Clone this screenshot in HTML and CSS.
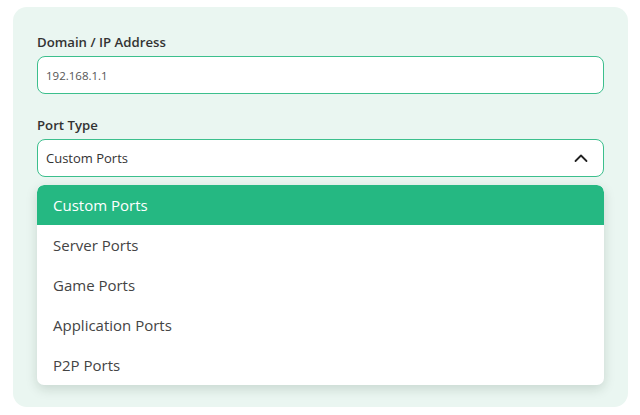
FILE: index.html
```html
<!DOCTYPE html>
<html lang="en">

<head>
    <meta charset="UTF-8">
    <meta name="viewport" content="width=device-width, initial-scale=1.0">
    <title>Port Checker</title>
    <link rel="stylesheet" href="styles.css">
</head>

<body>
    <div class="checker-card">
        <div class="form-group">
            <label for="host">Domain / IP Address</label>
            <input id="host" class="text-input" type="text" value="192.168.1.1">
        </div>
        <div class="form-group">
            <label>Port Type</label>
            <div class="select-wrap">
                <div class="select-box">
                    <span>Custom Ports</span>
                    <svg class="chevron" width="14" height="14" viewBox="0 0 14 14">
                        <path d="M1.5 10 L7 4.5 L12.5 10" fill="none" stroke="#222" stroke-width="1.8" stroke-linecap="round" stroke-linejoin="round" />
                    </svg>
                </div>
                <ul class="select-menu">
                    <li class="active">Custom Ports</li>
                    <li>Server Ports</li>
                    <li>Game Ports</li>
                    <li>Application Ports</li>
                    <li>P2P Ports</li>
                </ul>
            </div>
        </div>
    </div>
</body>

</html>
```

FILE: styles.css
```css
body {
    margin: 0;
    padding: 7px 12px 8px 13px;
    font-family: "Open Sans", "Noto Sans", sans-serif;
    background-color: white;
}

.checker-card {
    height: 400px;
    box-sizing: border-box;
    background-color: #eaf6f1;
    border-radius: 14px;
    padding: 25px 24px;
}

.form-group {
    margin-bottom: 21px;
}

.form-group label {
    display: block;
    font-size: 13.2px;
    font-weight: 600;
    color: #333;
    line-height: 20px;
    margin-bottom: 4px;
}

.text-input {
    display: block;
    width: 100%;
    height: 38px;
    box-sizing: border-box;
    border: 1px solid #3cbf8d;
    border-radius: 8px;
    padding: 0 8px;
    font-family: "Open Sans", "Noto Sans", sans-serif;
    font-size: 11.5px;
    color: #555;
    background: white;
    outline: none;
}

.select-wrap {
    position: relative;
}

.select-box {
    display: flex;
    align-items: center;
    justify-content: space-between;
    height: 38px;
    box-sizing: border-box;
    border: 1px solid #3cbf8d;
    border-radius: 8px;
    padding: 0 15px 0 8px;
    font-size: 13px;
    color: #333;
    background: white;
}

.chevron {
    margin-top: -1px;
}

.select-menu {
    position: absolute;
    top: 46px;
    left: 0;
    right: 0;
    margin: 0;
    padding: 0;
    list-style: none;
    background: white;
    border-radius: 7px;
    box-shadow: 0 4px 12px rgba(0, 40, 20, 0.15);
    overflow: hidden;
}

.select-menu li {
    height: 40px;
    line-height: 40px;
    padding: 0 16px;
    font-size: 15px;
    color: #444;
}

.select-menu li.active {
    background-color: #25b882;
    color: white;
    border-radius: 7px 7px 0 0;
}
```
